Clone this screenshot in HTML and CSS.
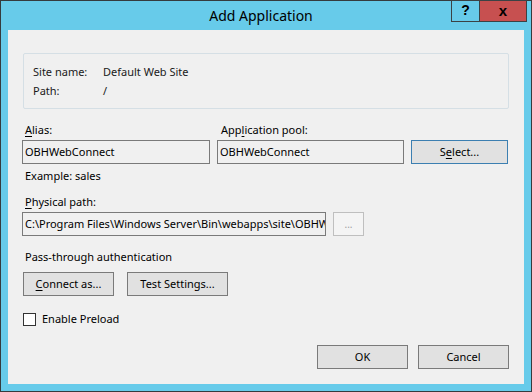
FILE: index.html
```html
<!DOCTYPE html>
<html>
<head>
<meta charset="utf-8">
<link rel="stylesheet" href="styles.css">
</head>
<body>
<div class="window">
  <div class="titlebar">
    <div class="title">Add Application</div>
    <div class="caption-btns">
      <div class="cbtn help">?</div>
      <div class="cbtn close">x</div>
    </div>
  </div>
  <div class="client">
    <div class="group">
      <div class="info-row"><span class="info-label">Site name:</span><span>Default Web Site</span></div>
      <div class="info-row"><span class="info-label">Path:</span><span>/</span></div>
    </div>
    <div class="row-fields">
      <div class="field alias">
        <div class="label"><u>A</u>lias:</div>
        <div class="input">OBHWebConnect</div>
      </div>
      <div class="field pool">
        <div class="label">App<u>l</u>ication pool:</div>
        <div class="input">OBHWebConnect</div>
      </div>
      <div class="btn select">S<u>e</u>lect...</div>
    </div>
    <div class="hint">Example: sales</div>
    <div class="label path-label"><u>P</u>hysical path:</div>
    <div class="path-row">
      <div class="input path">C:\Program Files\Windows Server\Bin\webapps\site\OBHWebConnect</div>
      <div class="btn browse">...</div>
    </div>
    <div class="section">Pass-through authentication</div>
    <div class="auth-row">
      <div class="btn connect"><u>C</u>onnect as...</div>
      <div class="btn test">Test Settings...</div>
    </div>
    <div class="check-row">
      <span class="checkbox"></span>
      <span class="check-text">Enable Preload</span>
    </div>
    <div class="footer">
      <div class="btn ok">OK</div>
      <div class="btn cancel">Cancel</div>
    </div>
  </div>
</div>
</body>
</html>
```
FILE: styles.css
```css
* { box-sizing: border-box; }
html, body { margin: 0; padding: 0; background: #67cbea; }
body {
  font-family: "Noto Sans", "Liberation Sans", sans-serif;
  font-size: 11px;
  color: #000;
}
.window {
  width: 532px;
  height: 392px;
  border: 1px solid #353b3e;
  background: #67cbea;
  display: flex;
  flex-direction: column;
}
.titlebar {
  height: 29px;
  display: grid;
  grid-template-columns: 1fr auto 1fr;
  align-items: start;
}
.title {
  grid-column: 2;
  font-size: 14px;
  line-height: 29px;
  padding-right: 10px;
  color: #000;
}
.caption-btns {
  grid-column: 3;
  justify-self: end;
  display: flex;
  margin-right: 4px;
  margin-top: -1px;
}
.cbtn {
  height: 22px;
  border: 1px solid #3b4245;
  font-family: "Liberation Sans", sans-serif;
  font-weight: bold;
  font-size: 14px;
  line-height: 19px;
  text-align: center;
  color: #000;
}
.help { width: 28px; background: #67cbea; border-right: none; }
.close { width: 48px; background: #c75050; font-size: 15px; }
.client {
  flex: 1;
  margin: 0 7px 7px 7px;
  background: #f0f0f0;
  padding: 23px 16px 15px 14px;
  display: flex;
  flex-direction: column;
}
.group {
  margin: 0 -1px 0 1px;
  height: 56px;
  border: 1px solid #d5dfe5;
  border-radius: 2px;
  padding: 8px 9px;
}
.info-row { display: flex; line-height: 19px; height: 19px; color: #1a1a1a; }
.info-label { width: 70px; }
.row-fields {
  display: flex;
  align-items: flex-end;
  margin-top: 13px;
}
.field { display: flex; flex-direction: column; }
.label { line-height: 16px; height: 16px; padding-left: 3px; margin-bottom: 2px; }
.alias { width: 188px; }
.pool { width: 187px; margin-left: 7px; }
.pool .label { padding-left: 4px; }
.input {
  height: 24px;
  border: 1px solid #7a7a7a;
  background: #f0f0f0;
  padding: 0 2px;
  line-height: 22px;
  white-space: nowrap;
  overflow: hidden;
}
.btn {
  height: 24px;
  border: 1px solid #7a7a7a;
  background: #e1e1e1;
  text-align: center;
  line-height: 22px;
}
.select { width: 97px; margin-left: 7px; border-color: #3c7fb1; }
.hint { line-height: 16px; margin-top: 4px; padding-left: 3px; }
.path-label { margin-top: 10px; }
.path-row { display: flex; }
.path { width: 304px; }
.browse {
  width: 31px;
  margin-left: 7px;
  border-color: #bfbfbf;
  background: #f4f4f4;
  color: #a0a0a0;
  font-size: 10px;
}
.section { line-height: 16px; margin-top: 13px; padding-left: 3px; }
.auth-row { display: flex; margin-top: 7px; padding-left: 1px; }
.connect { width: 91px; }
.test { width: 101px; margin-left: 13px; }
.check-row {
  display: flex;
  align-items: center;
  margin-top: 15px;
  padding-left: 1px;
  line-height: 16px;
}
.checkbox {
  width: 13px;
  height: 13px;
  border: 1px solid #333;
  background: #fff;
}
.check-text { margin-left: 6px; }
.footer {
  margin-top: auto;
  display: flex;
  justify-content: flex-end;
  margin-right: -1px;
}
.ok { width: 91px; }
.cancel { width: 91px; margin-left: 10px; }
u { text-decoration-thickness: 1px; text-underline-offset: 2px; }
```
